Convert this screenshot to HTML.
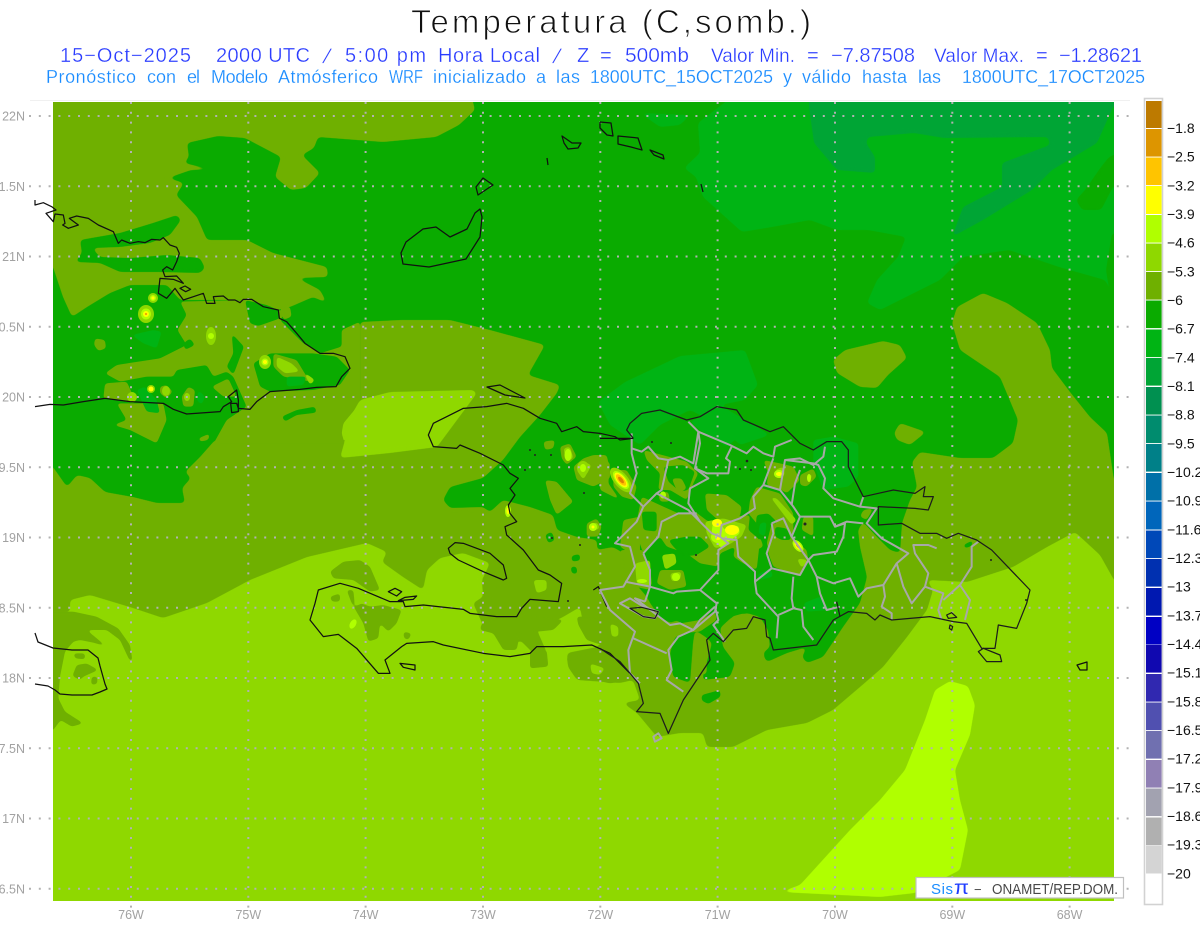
<!DOCTYPE html>
<html lang="es"><head><meta charset="utf-8"><title>Temperatura</title>
<style>html,body{margin:0;padding:0;background:#fff}svg{display:block}text{font-family:"Liberation Sans",sans-serif}
.m polygon{filter:url(#f)}.z polygon{filter:url(#F)}</style></head>
<body>
<svg xmlns="http://www.w3.org/2000/svg" width="1200" height="927" viewBox="0 0 1200 927">
<defs>
<filter id="f" x="-50%" y="-50%" width="200%" height="200%" color-interpolation-filters="sRGB"><feGaussianBlur stdDeviation="2"/><feComponentTransfer><feFuncA type="linear" slope="8" intercept="-3.5"/></feComponentTransfer></filter>
<filter id="F" x="-50%" y="-50%" width="200%" height="200%" color-interpolation-filters="sRGB"><feGaussianBlur stdDeviation="5"/><feComponentTransfer><feFuncA type="linear" slope="8" intercept="-3.5"/></feComponentTransfer></filter>
</defs>
<rect width="1200" height="927" fill="#fff"/>
<line x1="30" y1="100.5" x2="1130" y2="100.5" stroke="#f0f0f0"/>
<clipPath id="p"><rect x="53" y="102" width="1061" height="799"/></clipPath>
<g clip-path="url(#p)">
<rect x="53" y="102" width="1061" height="799" fill="#0aab00"/>
<g class="m">
<!-- NE bright green -->
<polygon fill="#00b414" points="741,90 698,123 700,153 684,168 696,177 703,197 742,232 772,227 810,220 837,230 868,230 906,237 898,257 877,280 867,303 880,310 940,280 963,257 1009,250 1059,267 1105,280 1125,315 1125,90"/>
<polygon fill="#0aab00" points="1125,150 1109,157 1101,167 1085,190 1076,200 1082,210 1101,210 1113,187 1125,180"/>
<polygon fill="#0aab00" points="1112,233 1125,233 1125,310 1112,307 1106,270"/>
<polygon fill="#00a535" points="809,107 814,143 837,170 875,173 875,157 866,143 868,137 914,133 944,138 1048,137 1050,145 1002,163 1002,187 963,207 952,237 983,220 1032,190 1052,170 1097,143 1113,107 1125,95 870,95 891,117 914,126 933,117 920,110 850,95 809,95"/>
<polygon fill="#00b414" points="640,113 690,115 680,125 660,127"/>
<!-- Atlantic bright patch -->
<polygon fill="#00b414" points="598,402 625,382 680,356 745,350 758,385 745,400 720,405 770,435 740,445 720,425 690,410 660,425 640,445 610,425"/>
<!-- NW olive -->
<polygon fill="#6fb000" points="40,90 470,90 475,110 459,125 436,137 383,142 318,137 314,148 302,155 320,173 306,188 291,190 275,177 281,157 245,138 218,136 187,143 189,157 184,163 214,170 191,170 168,178 184,183 176,195 197,217 207,240 247,240 273,253 327,267 328,277 297,278 320,290 327,303 313,297 290,307 277,310 250,323 247,300 180,300 167,285 130,285 110,293 87,307 72,317 63,297 53,267 40,250"/>
<polygon fill="#0aab00" points="177,215 153,223 120,233 80,240 82,253 75,262 100,263 120,272 160,272 200,273 205,268 200,258 167,255 130,258 100,257 92,248 120,247 150,243 170,235 181,220"/>
</g>
<!-- Central Cuba olive -->
<g transform="translate(20 190) scale(.33333)" class="z">
<polygon fill="#6fb000" points="480,335 680,330 690,400 770,365 810,350 780,390 850,460 900,490 965,470 965,420 1020,395 1020,780 570,780 620,690 680,650 640,560 620,545 580,560 560,525 470,540 460,560 380,560 300,575 255,550 290,525 420,505 500,465 472,420 500,375"/>
<polygon fill="#0aab00" points="635,430 672,470 640,555 620,530 640,490"/>
<polygon fill="#0aab00" points="700,520 750,490 880,490 950,500 990,540 960,585 880,600 750,605 720,590"/>
<polygon fill="#6fb000" points="760,490 830,510 860,560 890,580 850,570 790,560 760,530"/>
<polygon fill="#8fd800" points="770,500 815,520 840,545 795,550 770,530"/>
<polygon fill="#8fd800" points="850,545 885,570 870,585"/>
<polygon fill="#00b414" points="800,560 860,560 850,585 800,590"/>
<polygon fill="#0aab00" points="490,460 510,445 525,465 495,480"/>
<polygon fill="#0aab00" points="785,680 830,660 885,650 890,668 830,675 795,695"/>
<polygon fill="#6fb000" points="225,445 255,450 258,475 235,483 222,465"/>
<polygon fill="#6fb000" points="290,640 430,640 440,690 410,760 330,720 280,705 320,690"/>
<polygon fill="#6fb000" points="255,580 320,575 350,640 250,625"/>
<polygon fill="#6fb000" points="485,620 505,590 525,600 520,650 490,650"/>
<polygon fill="#6fb000" points="535,745 570,730 565,750 540,755"/>
<polygon fill="#6fb000" points="420,590 440,585 458,605 440,625 420,610"/>
<polygon fill="#6fb000" points="575,590 625,565 650,620 610,620"/>
<polygon fill="#00b414" points="335,435 400,420 425,425 410,475 370,460"/>
<polygon fill="#00b414" points="350,600 375,590 410,630 420,670 380,665"/>
<polygon fill="#00b414" points="535,600 555,620 545,645 530,630"/>
<polygon fill="#0aab00" points="675,330 740,345 775,360 780,385 715,408 690,400"/>
<polygon fill="#6fb000" points="780,350 810,350 815,380 790,390"/>
<polygon fill="#8fd800" points="970,700 1020,640 1020,780 980,780 965,730"/>
</g>
<g class="m">
<!-- Main southern olive -->
<polygon fill="#6fb000" points="40,462 53,467 67,487 77,475 90,478 105,492 133,497 157,503 185,503 182,488 191,478 185,472 200,457 215,440 360,440 360,322 400,320 450,320 490,330 545,345 528,375 560,385 557,393 540,415 520,437 503,460 483,478 450,487 443,500 450,508 483,507 490,512 503,500 530,507 553,515 557,530 577,537 597,540 597,550 613,547 630,557 635,583 647,597 650,603 660,617 670,623 678,620 687,632 675,637 670,653 673,677 690,683 693,643 695,630 707,638 712,643 702,680 730,677 735,663 723,647 720,628 732,617 747,613 760,617 768,630 770,647 763,653 767,662 787,653 807,647 802,657 807,663 823,657 843,627 860,603 867,577 860,547 858,530 863,522 877,537 890,550 900,553 902,523 910,500 917,487 912,462 920,452 960,458 993,458 1013,443 1018,420 1000,377 960,350 952,323 957,307 983,293 1007,303 1037,323 1050,350 1052,368 1070,392 1090,417 1107,433 1114,480 1125,490 1125,915 40,915"/>
<polygon fill="#6fb000" points="833,360 845,350 883,341 900,345 907,358 888,375 877,388 860,387 837,373"/>
<polygon fill="#6fb000" points="894,433 900,423 926,432 910,445 897,440"/>
<!-- lime W Haiti sea -->
<polygon fill="#8fd800" points="343,430 360,400 390,392 473,390 477,393 437,447 390,453 340,458 345,440"/>
</g>
<!-- DR detail: olive on green, zoom 5 coordinates -->
<g transform="translate(600 390) scale(.33333)" class="z">
<polygon fill="#00b414" points="270,95 350,60 420,85 430,130 380,170 300,120"/>
<polygon fill="#00b414" points="640,150 700,140 775,160 775,260 745,290 670,300 640,220"/>
<polygon fill="#00b414" points="50,65 120,60 150,100 90,130 50,105"/>
<polygon fill="#00b414" points="610,640 660,620 690,660 620,665"/>
<polygon fill="#00b414" points="470,555 510,535 520,560 480,570"/>
<polygon fill="#6fb000" points="130,180 205,200 260,215 295,250 280,280 260,330 210,300 175,300 180,250 140,210"/>
<polygon fill="#0aab00" points="190,230 250,225 285,245 265,300 240,305 205,275"/>
<polygon fill="#6fb000" points="215,265 245,265 260,295 235,312"/>
<polygon fill="#6fb000" points="315,310 380,315 425,350 420,380 360,395 320,360"/>
<polygon fill="#6fb000" points="470,290 540,310 580,370 580,420 570,480 620,520 600,560 520,530 505,490 505,430 470,400 445,370 450,330"/>
<polygon fill="#0aab00" points="470,375 505,370 530,395 510,450 465,440"/>
<polygon fill="#00b414" points="480,400 500,395 495,440 475,430"/>
<polygon fill="#8fd800" points="510,320 530,325 590,390 575,405"/>
<polygon fill="#6fb000" points="125,320 190,350 235,370 285,365 325,395 400,380 450,375 445,420 480,450 470,540 430,520 400,500 405,470 360,490 355,530 300,520 260,490 200,470 180,440 130,490 105,420"/>
<polygon fill="#0aab00" points="205,450 260,440 300,440 330,470 290,495 250,500 220,470"/>
<polygon fill="#0aab00" points="125,365 170,365 170,425 130,420"/>
<polygon fill="#8fd800" points="185,495 225,490 230,520 195,540"/>
<polygon fill="#8fd800" points="315,395 370,385 440,405 425,440 385,465 345,475 320,430"/>
<polygon fill="#b0ff00" points="340,390 365,390 370,420 415,405 420,430 385,455 365,475 340,450 335,425"/>
<polygon fill="#6fb000" points="490,210 540,220 580,230 600,270 560,310 545,300 500,285 505,250"/>
<polygon fill="#8fd800" points="525,240 550,230 555,255 530,265"/>
<polygon fill="#6fb000" points="600,255 640,235 650,260 620,290 600,285"/>
<polygon fill="#8fd800" points="620,255 635,250 635,275"/>
<polygon fill="#6fb000" points="0,195 30,220 25,280 60,330 0,300"/>
<polygon fill="#6fb000" points="40,240 80,240 110,290 100,330 65,320 40,290"/>
<polygon fill="#6fb000" points="60,480 130,480 150,600 105,590 70,560"/>
<polygon fill="#8fd800" points="105,520 150,510 155,590 110,580"/>
<polygon fill="#6fb000" points="175,310 205,305 210,335 180,335"/>
<polygon fill="#6fb000" points="610,380 640,380 640,440 605,420"/>
<polygon fill="#6fb000" points="180,540 250,540 260,590 210,600 170,580"/>
<polygon fill="#8fd800" points="210,550 245,545 240,570 215,575"/>
<polygon fill="#6fb000" points="515,400 550,400 575,445 620,480 625,510 590,530 560,510 510,490 500,460"/>
<polygon fill="#0aab00" points="525,410 560,415 575,450 545,450 525,440"/>
<polygon fill="#8fd800" points="590,505 625,510 605,535"/>
<polygon fill="#6fb000" points="790,360 820,355 800,390 780,380"/>
<polygon fill="#0aab00" points="1090,465 1120,450 1115,468 1095,475"/>
<polygon fill="#0aab00" points="305,915 360,900 362,920 325,942 305,932"/>
<polygon fill="#6fb000" points="460,470 480,440 490,470 470,480"/>
<polygon fill="#6fb000" points="395,680 430,670 465,685 450,710 420,715 395,710"/>
<polygon fill="#6fb000" points="285,750 320,745 320,850 290,860"/>
<polygon fill="#6fb000" points="240,700 300,690 345,665 350,690 300,725 240,730"/>
<polygon fill="#0aab00" points="490,795 520,775 530,800 500,815"/>
</g>
<!-- Haiti detail, zoom 6 coordinates -->
<g transform="translate(290 390) scale(.33333)" class="z">
<polygon fill="#6fb000" points="765,270 800,275 850,335 800,375 780,330"/>
<polygon fill="#6fb000" points="760,155 795,150 790,175 765,180"/>
<polygon fill="#6fb000" points="810,170 840,160 860,200 830,225 815,205"/>
<polygon fill="#8fd800" points="820,175 840,170 850,205 830,215"/>
<polygon fill="#6fb000" points="850,230 880,205 910,195 950,195 960,240 960,265 910,290 860,270"/>
<polygon fill="#8fd800" points="860,240 880,215 905,225 880,270"/>
<polygon fill="#6fb000" points="890,400 920,385 935,410 925,440 890,440"/>
<polygon fill="#8fd800" points="900,408 920,395 930,415 905,425"/>
<polygon fill="#6fb000" points="640,350 670,345 680,385 640,400"/>
<polygon fill="#0aab00" points="765,435 785,425 795,450 775,460"/>
<polygon fill="#0aab00" points="845,497 870,492 870,512 845,515"/>
<polygon fill="#0aab00" points="842,530 860,530 862,552 845,550"/>
<polygon fill="#0aab00" points="630,220 655,215 655,235"/>
<polygon fill="#6fb000" points="1000,390 1050,380 1050,510 990,470"/>
</g>
<g class="m">
<!-- Lime -->
<polygon fill="#8fd800" points="40,612 70,612 70,600 90,595 133,608 163,618 207,603 250,580 307,557 367,543 387,552 382,562 403,577 423,590 427,570 440,558 463,553 490,563 482,580 483,597 473,603 482,623 503,643 507,652 520,640 537,657 547,653 537,630 563,617 580,607 583,623 603,623 607,637 597,647 567,653 568,667 577,680 620,683 633,680 640,700 623,703 637,713 657,737 680,733 703,733 707,747 733,747 767,730 807,723 833,710 860,687 883,667 907,637 927,610 933,590 927,580 967,582 1013,567 1047,547 1075,532 1100,555 1114,580 1125,590 1125,915 40,915"/>
</g>
<!-- Lime olive patches -->
<g transform="translate(40 570) scale(.33333)" fill="#6fb000" class="z">
<polygon points="-10,125 100,125 170,140 235,175 270,225 278,275 268,270 240,210 200,180 140,180 200,230 160,218 120,210 100,215 75,245 60,320 55,385 75,425 130,460 95,470 62,450 40,480 -10,490"/>
<polygon points="100,250 135,250 135,268 105,265"/>
<polygon points="110,285 140,280 175,300 130,320 120,330 97,318"/>
<polygon points="155,320 172,320 172,342 153,345"/>
<polygon points="235,425 262,385 255,405"/>
</g>
<g transform="translate(290 390) scale(.33333)" fill="#6fb000" class="z">
<polygon points="120,545 160,515 210,510 240,530 270,600 240,605 190,570 130,565"/>
<polygon points="120,620 150,610 150,635 125,635"/>
<polygon points="170,600 190,600 195,650 215,640 240,650 280,645 335,660 320,700 295,725 270,700 265,745 235,755 220,700 185,640"/>
<polygon points="340,725 365,730 355,750 342,745"/>
<polygon points="575,560 620,560 660,570 690,570 640,590 590,600"/>
<polygon points="550,640 600,615 640,650 590,680"/>
<polygon points="575,700 640,680 690,670 760,680 820,690 790,720 690,730 680,780 640,780 610,730 570,720"/>
<polygon points="720,785 770,780 775,830 720,835"/>
<polygon points="830,800 900,795 960,815 1020,870 960,880 870,860 835,830"/>
<polygon points="860,680 900,680 960,690 1000,680 1040,740 1020,780 960,770 920,760 890,750 865,705"/>
</g>
<g transform="translate(290 390) scale(.33333)" fill="#8fd800" class="z">
<polygon points="730,570 770,570 770,600 740,610"/>
<polygon points="900,820 945,835 930,855 905,850"/>
<polygon points="960,700 985,710 985,740 965,740"/>
</g>
<g class="m">
<!-- Bright lime -->
<polygon fill="#b0ff00" points="950,681 968,686 975,705 970,735 955,770 960,800 968,830 960,870 915,893 880,897 780,892 800,885 850,830 880,800 905,770 925,720 935,690"/>
</g>
<!-- hot spots -->
<g>
<g transform="rotate(50 621 480)"><ellipse cx="621" cy="480" rx="15" ry="7" fill="#8fd800"/><ellipse cx="621" cy="480" rx="11" ry="5" fill="#b0ff00"/><ellipse cx="621" cy="480" rx="9" ry="4" fill="#ffff00"/><ellipse cx="621" cy="480" rx="7" ry="3" fill="#ffc400"/><ellipse cx="621" cy="480" rx="4" ry="1.8" fill="#dd8000"/></g>
<ellipse cx="717" cy="523" rx="5" ry="4" fill="#ffff00"/><ellipse cx="718" cy="537" rx="7" ry="6" fill="#b0ff00"/><ellipse cx="718" cy="537" rx="3" ry="3" fill="#ffff00"/><ellipse cx="732" cy="530" rx="7" ry="5" fill="#ffff00"/>
<g transform="rotate(50 798 546)"><ellipse cx="798" cy="546" rx="7" ry="4" fill="#b0ff00"/><ellipse cx="798" cy="546" rx="5" ry="2.5" fill="#ffff00"/><ellipse cx="798" cy="546" rx="2.5" ry="1.2" fill="#e08000"/></g>
<ellipse cx="779" cy="474" rx="5" ry="4" fill="#b0ff00"/><ellipse cx="779" cy="474" rx="3" ry="2" fill="#ffff00"/>
<ellipse cx="809" cy="478" rx="2" ry="4" fill="#b0ff00"/>
<ellipse cx="663" cy="495" rx="3" ry="3.5" fill="#b0ff00"/>
<ellipse cx="676" cy="577" rx="4" ry="4" fill="#b0ff00"/>
<ellipse cx="642" cy="581" rx="5" ry="2" fill="#b0ff00"/>
<ellipse cx="568" cy="455" rx="3.5" ry="6" fill="#b0ff00"/>
<ellipse cx="583" cy="468" rx="6" ry="7" fill="#8fd800"/><ellipse cx="583" cy="468" rx="3" ry="4" fill="#b0ff00"/>
<ellipse cx="593" cy="527" rx="4" ry="4" fill="#b0ff00"/><ellipse cx="593" cy="527" rx="1.5" ry="1.5" fill="#ffff00"/>
<ellipse cx="508" cy="511" rx="3" ry="6" fill="#b0ff00"/><ellipse cx="508" cy="511" rx="1.5" ry="3.5" fill="#ffff00"/>
<ellipse cx="353" cy="624" rx="3" ry="5" fill="#b0ff00" transform="rotate(30 353 624)"/>
<ellipse cx="153" cy="298" rx="5" ry="5" fill="#8fd800"/><ellipse cx="153" cy="298" rx="3" ry="3" fill="#b0ff00"/><circle cx="153" cy="298" r="1.6" fill="#ffff00"/>
<ellipse cx="146" cy="314" rx="8" ry="9" fill="#8fd800"/><ellipse cx="146" cy="314" rx="5" ry="5.5" fill="#b0ff00"/><circle cx="146" cy="314" r="3" fill="#ffff00"/><circle cx="146" cy="314" r="1" fill="#ee9000"/>
<ellipse cx="211" cy="336" rx="5" ry="9" fill="#8fd800"/><ellipse cx="211" cy="336" rx="3" ry="3" fill="#b0ff00"/>
<ellipse cx="265" cy="362" rx="6" ry="7" fill="#8fd800"/><circle cx="265" cy="362" r="3.5" fill="#b0ff00"/><circle cx="265" cy="362" r="2" fill="#ffff00"/>
<ellipse cx="151" cy="389" rx="4" ry="4" fill="#8fd800"/><circle cx="151" cy="389" r="2.5" fill="#ffff00"/>
<ellipse cx="132" cy="397" rx="5" ry="5" fill="#8fd800"/>
<ellipse cx="166" cy="391" rx="4" ry="5" fill="#8fd800"/>
<ellipse cx="187" cy="397" rx="3" ry="4" fill="#8fd800"/>
</g>
<!-- small black dots -->
<g fill="#222"><circle cx="652" cy="442" r="1"/><circle cx="671" cy="443" r="1"/><circle cx="747" cy="461" r="1.3"/><circle cx="740" cy="469" r="1"/><circle cx="751" cy="470" r="1"/><circle cx="805" cy="524" r="1.5"/><circle cx="991" cy="560" r="1"/><circle cx="1026" cy="600" r="1"/><circle cx="696" cy="555" r="1"/><circle cx="568" cy="601" r="1"/><circle cx="551" cy="455" r="1"/><circle cx="525" cy="470" r="1"/><circle cx="535" cy="455" r="1"/><circle cx="530" cy="450" r="1"/><circle cx="584" cy="493" r="1"/><circle cx="552" cy="538" r="1"/><circle cx="580" cy="545" r="1"/></g>
</g>
<!-- grid -->
<g stroke="#b2b2b2" stroke-width="2" stroke-dasharray="2 7.8" fill="none">
<path d="M29 116H1134M29 186.3H1134M29 256.5H1134M29 326.8H1134M29 397H1134M29 467.3H1134M29 537.5H1134M29 607.8H1134M29 678H1134M29 748.3H1134M29 818.5H1134M29 888.8H1134"/>
<path d="M131 102V908M248.3 102V908M365.6 102V908M483 102V908M600.3 102V908M717.6 102V908M835 102V908M952.3 102V908M1069.6 102V908"/>
</g>
<!-- coasts -->
<g fill="none" stroke="#111" stroke-width="1.25" stroke-linejoin="round">
<g transform="translate(20 190) scale(.33333)">
<g stroke-width="3.7">
<polyline points="45,30 45,45 70,38 95,50 108,60 78,70 100,95 105,72 130,75 135,100 128,105 145,115 175,105 148,85 170,78 205,85 235,105 280,125 295,160 305,150 330,160 355,155 375,158 395,148 420,150 430,143 450,165 470,172 478,190 470,215 458,240 440,230 428,240 435,260 470,258 490,280 460,268 420,265 415,310 440,325 465,295 490,330 520,320 550,310 560,340 585,340 580,320 610,318 625,330 645,330 660,338 670,328 695,328 730,350 775,360 778,385 800,395 830,430 855,460 900,490 940,490 975,500 990,535 965,560 948,590 890,592 840,598 750,605 710,635 690,658 655,655 650,640 632,640 635,668 655,665 655,630 650,600 625,620 635,635 610,650 600,665 500,672 460,658 430,640 330,635 255,625 190,635 130,645 90,643 45,650"/>
<polygon points="480,295 495,288 512,298 497,305"/>
</g></g>
<g transform="translate(290 390) scale(.33333)"><g stroke-width="3.7">
<polyline points="1030,145 990,150 975,140 930,130 880,125 860,110 815,125 800,100 750,85 700,55 650,40 590,50 520,55 470,80 430,100 415,135 430,170 500,175 510,165 570,190 640,225 660,250 685,265 660,295 675,315 655,345 660,370 680,395 645,410 650,435 700,480 745,540 780,555 815,580 805,635 720,628 695,655 680,680 620,680 540,670 520,658 400,645 345,650 340,635 300,635 205,595 150,580 85,600 75,640 60,690 100,740 145,733 200,775 265,850 300,850 285,810 335,770 350,760 430,755 460,765 580,790 660,800 720,790 740,770 820,770 905,765 960,790 1015,845 1050,880"/>
<polygon points="475,475 495,458 520,460 600,490 640,525 650,565 640,570 580,545 505,510 480,490"/>
<polygon points="295,605 315,595 335,605 320,618"/>
<polygon points="330,820 375,825 375,840 340,832"/>
<polygon points="325,632 345,622 380,618 370,628"/>
<polyline points="910,600 925,590 950,650"/>
</g></g>
<polygon points="487,387 500,385 525,398 505,395"/>
<polygon points="483,178 493,185 478,195 476,187"/>
<polygon points="480,209 482,217 480,237 466,259 429,267 403,264 401,253 406,242 423,229 436,227 450,237 467,229 475,213"/>
<polygon points="562,136 572,143 581,143 578,148 568,149 564,143"/>
<polyline points="547,158 548,165"/>
<polyline points="600,122 611,123 613,136 607,135 600,128 600,122"/>
<polygon points="618,136 638,138 642,150 631,147 618,144"/>
<polygon points="650,150 663,155 664,159 654,155"/>
<polyline points="701,184 703,192"/>
<polygon points="1077,665 1087,662 1087,670 1080,670"/>
<polyline points="35,633 38,642 53,648 72,650 88,650 98,658 100,666 105,684 107,689 100,692 92,695 80,695 72,695 60,694 55,690 48,686 35,684"/>
</g>
<!-- province borders + DR coast -->
<g transform="translate(600 390) scale(.33333)" fill="none" stroke-linejoin="round">
<g stroke="#a8a8a8" stroke-width="6">
<polyline points="95,130 95,190 110,250 90,310 130,350 110,395 45,460 90,470 105,530 70,590 0,600 30,660 105,725 85,780 90,850 120,880"/>
<polyline points="95,175 125,185 145,170 175,205 205,210 240,200 280,220 295,125 265,95"/>
<polyline points="295,125 390,165 440,190 460,170 490,190 520,200 525,170 575,150"/>
<polyline points="295,125 300,160 285,235 320,250 385,250 390,215 378,205 395,170"/>
<polyline points="205,210 185,300 170,310 265,360 300,395 335,430 360,440"/>
<polyline points="285,235 325,265 270,295 265,340 300,395"/>
<polyline points="520,205 490,285 460,320 465,355 420,385 365,405 360,440 385,460 355,480 355,540 300,600 230,605 220,610 150,590 75,575"/>
<polyline points="130,350 170,310"/>
<polyline points="130,490 175,440 185,395 235,370 290,370"/>
<polyline points="130,490 150,540 150,590 135,635"/>
<polyline points="365,445 410,450 415,500 465,545 465,575 515,535 600,555 625,510 575,440 600,380 690,380 705,410 740,395 790,400"/>
<polyline points="490,285 540,300 580,350 600,380"/>
<polyline points="540,300 555,210 600,205 640,225 670,200 675,170"/>
<polyline points="555,210 640,220 655,225 675,265 670,295 700,325 780,350 790,320"/>
<polyline points="600,240 585,280 575,345"/>
<polyline points="780,350 830,355 800,400 845,445 925,490 890,520 850,585 800,595 775,620 750,565 700,580 650,560 625,510"/>
<polyline points="705,410 735,400 730,440 710,485 640,495 625,510"/>
<polyline points="515,400 550,385 575,440"/>
<polyline points="515,400 520,430 500,490 515,535"/>
<polyline points="465,575 470,610 535,680 530,745"/>
<polyline points="580,560 575,625 580,655 535,675"/>
<polyline points="580,655 605,660 610,710 640,750"/>
<polyline points="650,560 660,610 680,660 720,650"/>
<polyline points="300,600 350,640 345,665 280,720 240,700 210,705 105,625 135,635"/>
<polyline points="345,650 300,690 280,720 235,740 205,780 215,840 200,870 250,905"/>
<polyline points="345,650 355,690 340,705 375,755"/>
<polyline points="100,745 200,790"/>
<polyline points="850,585 855,620 845,650 875,670 875,690"/>
<polyline points="890,520 910,590 935,640 975,590 985,550 945,490 940,465 985,465 1010,475"/>
<polyline points="975,590 1030,610 1015,660 1025,690"/>
<polyline points="1030,630 1080,585 1110,630 1095,690"/>
<polyline points="1080,585 1115,530 1115,470 1135,455"/>
<polygon points="60,640 90,625 130,650 175,665 165,685 130,680"/>
<polygon points="160,1040 175,1030 185,1045 165,1055"/>
</g>
<g stroke="#1c1c1c" stroke-width="3.7">
<polyline points="100,145 80,120 90,100 125,70 180,60 260,90 300,80 350,50 410,60 430,90 510,125 550,110 600,160 640,180 680,155 725,155 745,180 745,230 790,320 880,300 945,310 975,290 970,320 1000,320 985,360 945,355 835,350 835,405 905,400 960,430 1010,430 1040,445 1075,430 1130,450 1175,480 1290,600 1280,640 1250,715 1195,705 1185,775 1145,775 1100,700 1060,695 990,680 875,690 840,675 825,690 800,670 745,665 700,690 650,765 520,780 510,745 500,740 495,690 460,680 440,715 400,720 370,755 340,730 320,750 330,810 250,930 205,1030 180,970 110,965 130,940 115,880 90,850 60,815 0,775"/>
<polygon points="1135,785 1150,775 1200,795 1205,815 1160,815"/>
<polygon points="1040,675 1055,668 1070,682 1045,685"/>
<polygon points="1050,705 1058,710 1055,720 1048,715"/>
<polygon points="90,655 125,652 175,665 165,685 130,680"/>
<polyline points="710,635 720,680"/>
</g>
<path d="M100,145H0" stroke="#111" stroke-width="3.7"/>
</g>
<!-- Title -->
<text x="411" y="33" font-size="33" textLength="400" lengthAdjust="spacing" fill="#111" stroke="#fff" stroke-width=".9">Temperatura (C,somb.)</text>
<!-- line 2 -->
<g fill="#2a3cff" font-size="20" stroke="#fff" stroke-width=".3">
<text x="60" y="62" textLength="131" lengthAdjust="spacing">15−Oct−2025</text>
<text x="216" y="62" textLength="94" lengthAdjust="spacing">2000 UTC</text>
<text transform="translate(322 63) skewX(-17)">/</text>
<text x="345" y="62" textLength="81" lengthAdjust="spacing">5:00 pm</text>
<text x="438" y="62" textLength="102" lengthAdjust="spacing">Hora Local</text>
<text transform="translate(552 63) skewX(-17)">/</text>
<text x="577" y="62">Z</text>
<text x="600" y="62">=</text>
<text x="625" y="62" textLength="64" lengthAdjust="spacingAndGlyphs">500mb</text>
<text x="711" y="62" textLength="84" lengthAdjust="spacing" font-size="19">Valor Min.</text>
<text x="807" y="62">=</text>
<text x="831" y="62" textLength="84" lengthAdjust="spacing">−7.87508</text>
<text x="934" y="62" textLength="90" lengthAdjust="spacing" font-size="19">Valor Max.</text>
<text x="1036" y="62">=</text>
<text x="1059" y="62" textLength="83" lengthAdjust="spacing">−1.28621</text>
</g>
<!-- line 3 -->
<g fill="#1a8cff" font-size="18" stroke="#fff" stroke-width=".2">
<text x="46" y="83" textLength="90" lengthAdjust="spacing">Pronóstico</text>
<text x="147" y="83" textLength="29" lengthAdjust="spacing">con</text>
<text x="187" y="83" textLength="13" lengthAdjust="spacing">el</text>
<text x="211" y="83" textLength="57" lengthAdjust="spacing">Modelo</text>
<text x="278" y="83" textLength="100" lengthAdjust="spacing">Atmósferico</text>
<text x="389" y="83" textLength="34" lengthAdjust="spacingAndGlyphs">WRF</text>
<text x="433" y="83" textLength="93" lengthAdjust="spacing">inicializado</text>
<text x="536" y="83">a</text>
<text x="556" y="83" textLength="24" lengthAdjust="spacing">las</text>
<text x="590" y="83" textLength="183" lengthAdjust="spacingAndGlyphs">1800UTC_15OCT2025</text>
<text x="783" y="83">y</text>
<text x="802" y="83" textLength="49" lengthAdjust="spacing">válido</text>
<text x="862" y="83" textLength="45" lengthAdjust="spacing">hasta</text>
<text x="918" y="83" textLength="23" lengthAdjust="spacing">las</text>
<text x="962" y="83" textLength="183" lengthAdjust="spacingAndGlyphs">1800UTC_17OCT2025</text>
</g>
<!-- axis -->
<g fill="#a2a2a2" font-size="12.5" text-anchor="end">
<text x="25" y="120.5">22N</text><text x="25" y="190.8">1.5N</text><text x="25" y="261">21N</text><text x="25" y="331.3">0.5N</text><text x="25" y="401.5">20N</text><text x="25" y="471.8">9.5N</text><text x="25" y="542">19N</text><text x="25" y="612.3">8.5N</text><text x="25" y="682.5">18N</text><text x="25" y="752.8">7.5N</text><text x="25" y="823">17N</text><text x="25" y="893.3">6.5N</text>
</g>
<g fill="#a2a2a2" font-size="12.5" text-anchor="middle">
<text x="131" y="919">76W</text><text x="248.3" y="919">75W</text><text x="365.6" y="919">74W</text><text x="483" y="919">73W</text><text x="600.3" y="919">72W</text><text x="717.6" y="919">71W</text><text x="835" y="919">70W</text><text x="952.3" y="919">69W</text><text x="1069.6" y="919">68W</text>
</g>
<!-- credit -->
<rect x="916" y="877.5" width="207.5" height="20.5" fill="#fff" stroke="#c0c0c0" stroke-width="1.2"/>
<text x="931" y="894" font-size="15" fill="#1a8cff" textLength="22" lengthAdjust="spacing">Sis</text>
<text x="954" y="894" font-size="19" fill="#1f3cff" textLength="15" lengthAdjust="spacingAndGlyphs">π</text>
<text x="974" y="894" font-size="13" fill="#444">−</text>
<text x="992" y="894" font-size="14.5" fill="#484848" textLength="126" lengthAdjust="spacingAndGlyphs">ONAMET/REP.DOM.</text>
<!-- colorbar -->
<rect x="1144.5" y="98.5" width="18" height="806" fill="#fff" stroke="#d2d2d2" stroke-width="1.6"/>
<g>
<rect x="1146" y="101" width="15.6" height="27" fill="#bd7a00"/><rect x="1146" y="129" width="15.6" height="27.6" fill="#dd9500"/><rect x="1146" y="157.5" width="15.6" height="27.6" fill="#ffc400"/><rect x="1146" y="186" width="15.6" height="28" fill="#ffff00"/><rect x="1146" y="215" width="15.6" height="27.6" fill="#b0ff00"/><rect x="1146" y="243.5" width="15.6" height="27.6" fill="#8fd800"/><rect x="1146" y="272" width="15.6" height="27.6" fill="#6fb000"/><rect x="1146" y="300.5" width="15.6" height="27.6" fill="#0aab00"/><rect x="1146" y="329.5" width="15.6" height="27.6" fill="#00b414"/><rect x="1146" y="358" width="15.6" height="27.6" fill="#00a535"/><rect x="1146" y="387" width="15.6" height="27.6" fill="#009050"/><rect x="1146" y="415.5" width="15.6" height="27.6" fill="#008c6e"/><rect x="1146" y="444" width="15.6" height="27.6" fill="#008088"/><rect x="1146" y="473" width="15.6" height="27.6" fill="#0070a8"/><rect x="1146" y="501.5" width="15.6" height="28" fill="#0066bb"/><rect x="1146" y="530.5" width="15.6" height="27.6" fill="#0048b8"/><rect x="1146" y="559" width="15.6" height="27.6" fill="#0030b0"/><rect x="1146" y="588" width="15.6" height="27.6" fill="#0018b0"/><rect x="1146" y="617" width="15.6" height="27.6" fill="#0000c4"/><rect x="1146" y="645" width="15.6" height="27.6" fill="#1008b0"/><rect x="1146" y="674" width="15.6" height="27.6" fill="#3028b0"/><rect x="1146" y="702.5" width="15.6" height="27.6" fill="#5050b0"/><rect x="1146" y="731" width="15.6" height="27.6" fill="#7070b0"/><rect x="1146" y="760" width="15.6" height="27.6" fill="#9080b4"/><rect x="1146" y="788.5" width="15.6" height="27.6" fill="#a2a2b0"/><rect x="1146" y="817.5" width="15.6" height="27.6" fill="#b0b0b0"/><rect x="1146" y="845.5" width="15.6" height="28" fill="#d4d4d4"/>
</g>
<g fill="#111" font-size="14">
<text x="1167" y="133">−1.8</text><text x="1167" y="161.7">−2.5</text><text x="1167" y="190.3">−3.2</text><text x="1167" y="219">−3.9</text><text x="1167" y="247.7">−4.6</text><text x="1167" y="276.3">−5.3</text><text x="1167" y="305">−6</text><text x="1167" y="333.7">−6.7</text><text x="1167" y="362.3">−7.4</text><text x="1167" y="391">−8.1</text><text x="1167" y="419.7">−8.8</text><text x="1167" y="448.3">−9.5</text><text x="1167" y="477">−10.2</text><text x="1167" y="505.7">−10.9</text><text x="1167" y="534.3">−11.6</text><text x="1167" y="563">−12.3</text><text x="1167" y="591.7">−13</text><text x="1167" y="620.3">−13.7</text><text x="1167" y="649">−14.4</text><text x="1167" y="677.7">−15.1</text><text x="1167" y="706.3">−15.8</text><text x="1167" y="735">−16.5</text><text x="1167" y="763.7">−17.2</text><text x="1167" y="792.3">−17.9</text><text x="1167" y="821">−18.6</text><text x="1167" y="849.7">−19.3</text><text x="1167" y="878.3">−20</text>
</g>
</svg>
</body></html>
